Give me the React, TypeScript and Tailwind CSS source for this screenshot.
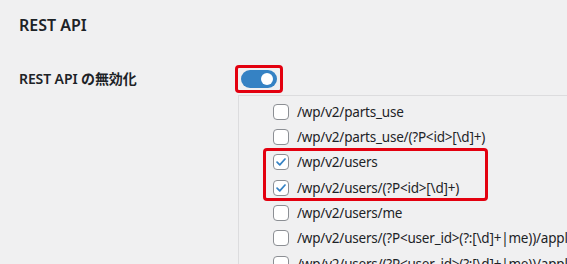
import React from 'react'

const ROUTES: { path: string; checked: boolean }[] = [
  { path: '/wp/v2/parts_use', checked: false },
  { path: '/wp/v2/parts_use/(?P<id>[\\d]+)', checked: false },
  { path: '/wp/v2/users', checked: true },
  { path: '/wp/v2/users/(?P<id>[\\d]+)', checked: true },
  { path: '/wp/v2/users/me', checked: false },
  { path: '/wp/v2/users/(?P<user_id>(?:[\\d]+|me))/application-passwords', checked: false },
  { path: '/wp/v2/users/(?P<user_id>(?:[\\d]+|me))/application-passwords/introspect', checked: false },
]

function Checkbox({ checked }: { checked: boolean }) {
  return (
    <span className="flex h-4 w-4 flex-shrink-0 items-center justify-center rounded-[4px] border border-[#8c8f94] bg-white">
      {checked && (
        <svg viewBox="0 0 16 16" className="h-[14px] w-[14px]" aria-hidden>
          <path d="M3.5 8.2 L6.6 11.2 L12.6 4.6" fill="none" stroke="#3582c4" strokeWidth="2" strokeLinecap="round" strokeLinejoin="round" />
        </svg>
      )}
    </span>
  )
}

function Row({ path, checked }: { path: string; checked: boolean }) {
  return (
    <li className="flex h-[25.33px] items-center gap-2 whitespace-nowrap">
      <Checkbox checked={checked} />
      <span>{path}</span>
    </li>
  )
}

export default function App() {
  return (
    <div
      className="h-[264px] w-[567px] overflow-hidden bg-[#f0f0f1] pl-[19px] text-[#1d2327]"
      style={{ fontFamily: '"Noto Sans", "Noto Sans CJK JP", sans-serif' }}
    >
      <h2 className="pt-[13px] text-[16px] leading-[24px] font-semibold">REST API</h2>
      <div className="mt-[28px] flex">
        <div className="w-[219px] flex-shrink-0 pt-[2px] text-[14px] leading-[24px] font-semibold tracking-[-0.1px]">
          REST API の無効化
        </div>
        <div className="min-w-0 flex-1">
          <div className="-ml-[3px] inline-flex h-[28px] w-[48px] items-center justify-center rounded-[4px] border-[3px] border-[#e3000f]">
            <span className="flex h-[18px] w-[36px] items-center justify-end rounded-full bg-[#3582c4] pr-[4px]">
              <span className="h-[12px] w-[12px] rounded-full bg-white" />
            </span>
          </div>
          <div className="mt-[2px] border-t border-l border-[#dcdcde] pt-[3px] pl-[34px] text-[13.5px] tracking-[-0.2px]">
            <ul>
              <Row {...ROUTES[0]} />
              <Row {...ROUTES[1]} />
              <div className="relative">
                <div className="pointer-events-none absolute -top-[2px] -bottom-[1px] -left-[10px] w-[225px] rounded-[4px] border-[3px] border-[#e3000f]" />
                <Row {...ROUTES[2]} />
                <Row {...ROUTES[3]} />
              </div>
              <Row {...ROUTES[4]} />
              <Row {...ROUTES[5]} />
              <Row {...ROUTES[6]} />
            </ul>
          </div>
        </div>
      </div>
    </div>
  )
}
